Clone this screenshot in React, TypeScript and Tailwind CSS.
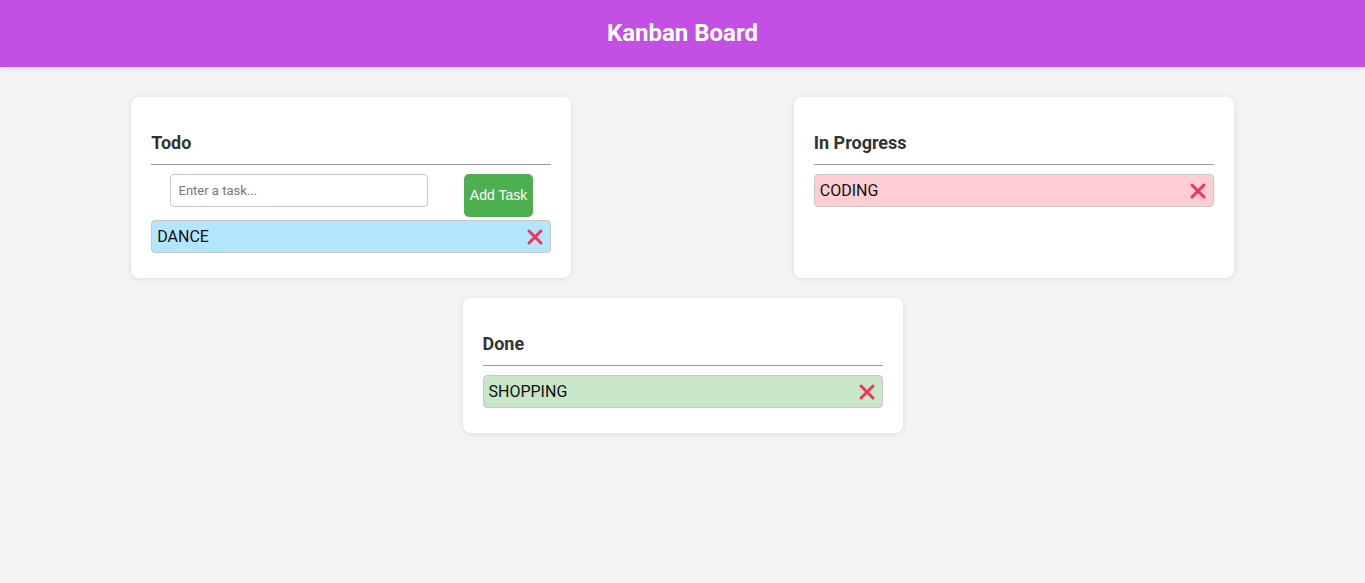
import React, { useState } from 'react';

type Task = { id: number; text: string };

const CloseIcon: React.FC = () => (
  <svg viewBox="0 0 18 18" className="w-[18px] h-[18px]" fill="none">
    <path d="M3 3L15 15M15 3L3 15" stroke="#f1335f" strokeWidth="3" strokeLinecap="round" />
  </svg>
);

const TaskItem: React.FC<{ task: Task; color: string; onDelete: () => void }> = ({ task, color, onDelete }) => (
  <div className={`my-[5px] h-[33px] flex items-center justify-between pl-[5px] pr-[6px] border border-[#c8c8c8] rounded-[4px] ${color}`}>
    <span className="text-[16px] text-[#111]">{task.text}</span>
    <button onClick={onDelete} className="flex items-center">
      <CloseIcon />
    </button>
  </div>
);

const Column: React.FC<{ title: string; children: React.ReactNode }> = ({ title, children }) => (
  <div className="w-[440px] m-[10px] p-5 bg-white rounded-lg shadow-[0_1px_6px_rgba(0,0,0,0.1)] flex flex-col">
    <h2 className="mt-[15px] mb-1 pb-[11px] border-b border-[#9a9a9a] text-[18px] leading-[21px] font-bold text-[#333]">{title}</h2>
    {children}
  </div>
);

export default function App() {
  const [todo, setTodo] = useState<Task[]>([{ id: 1, text: 'DANCE' }]);
  const [progress, setProgress] = useState<Task[]>([{ id: 2, text: 'CODING' }]);
  const [done, setDone] = useState<Task[]>([{ id: 3, text: 'SHOPPING' }]);
  const [input, setInput] = useState('');

  const addTask = () => {
    if (!input.trim()) return;
    setTodo(prev => [...prev, { id: Date.now(), text: input.toUpperCase() }]);
    setInput('');
  };

  return (
    <div className="min-h-[583px] bg-[#f4f4f4] font-['Roboto',sans-serif]">
      <header className="h-[67px] pb-[2px] bg-[#c34fe4] flex items-center justify-center shadow-[0_2px_4px_rgba(0,0,0,0.08)]">
        <h1 className="text-[24px] font-bold text-white">Kanban Board</h1>
      </header>

      <div className="p-5 flex flex-wrap justify-around">
        {/* Todo */}
        <Column title="Todo">
          <div className="mt-[5px] -mb-[2px] flex justify-around items-start">
            <input
              type="text"
              value={input}
              onChange={e => setInput(e.target.value)}
              placeholder="Enter a task..."
              className="w-[258px] h-[33px] px-2 border border-[#c8c8c8] rounded-[4px] text-[13px] text-[#333] placeholder-[#777] outline-none"
            />
            <button onClick={addTask} className="w-[69px] h-[43px] bg-[#4caf50] text-white rounded-[5px] text-[14px] font-['Liberation_Sans',sans-serif]">
              Add Task
            </button>
          </div>
          {todo.map(t => (
            <TaskItem key={t.id} task={t} color="bg-[#b3e5fc]" onDelete={() => setTodo(p => p.filter(x => x.id !== t.id))} />
          ))}
        </Column>

        {/* In Progress */}
        <Column title="In Progress">
          {progress.map(t => (
            <TaskItem key={t.id} task={t} color="bg-[#ffcdd2]" onDelete={() => setProgress(p => p.filter(x => x.id !== t.id))} />
          ))}
        </Column>

        {/* Done */}
        <Column title="Done">
          {done.map(t => (
            <TaskItem key={t.id} task={t} color="bg-[#c8e6c9]" onDelete={() => setDone(p => p.filter(x => x.id !== t.id))} />
          ))}
        </Column>
      </div>
    </div>
  );
}
